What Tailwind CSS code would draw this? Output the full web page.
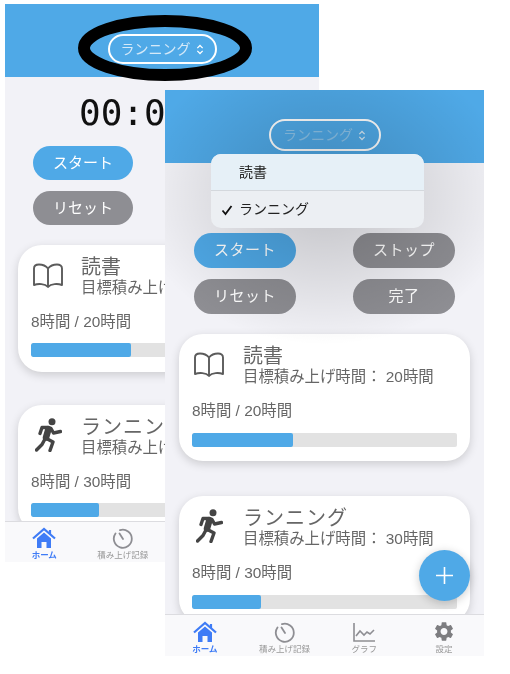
<!DOCTYPE html>
<html lang="ja">
  <head>
    <meta charset="UTF-8" />
    <meta name="viewport" content="width=device-width, initial-scale=1.0" />
    <title>積み上げ記録</title>
    <script src="https://cdn.jsdelivr.net/npm/@tailwindcss/browser@4"></script>
  </head>
  <body class="bg-white font-['Liberation_Sans','Noto_Sans_CJK_JP',sans-serif]">
    <div class="relative w-[510px] h-[674px] overflow-hidden bg-white blur-[0.4px]">

      <!-- Phone 1 -->
      <div class="absolute left-[5px] top-[4px] w-[314px] h-[558px] flex flex-col overflow-hidden bg-[#f2f2f7]">
        <div class="h-[73px] shrink-0 bg-[#4fa9e7] flex items-center justify-center pt-[17px]">
          <div class="w-[109px] h-[30px] rounded-full border-2 border-white flex items-center justify-center gap-[5px] text-[14px] text-[#d5e9f8]">
            ランニング
            <svg width="8" height="11" viewBox="0 0 9 12" fill="none" stroke="#fff" stroke-width="1.400"><path d="M1.500 4.500 4.500 1.500 7.500 4.500M1.500 7.500 4.500 10.500 7.500 7.500" /></svg>
          </div>
        </div>
        <div class="flex-1 min-h-0 overflow-hidden">
          <div class="h-[69px] pt-[3px] pl-[74px] flex items-center text-[36px] leading-none font-['DejaVu_Sans_Mono',monospace] text-[#111] whitespace-nowrap">00:00:00</div>
          <div class="px-[28px] grid grid-cols-[100px] gap-y-[11px]">
            <div class="h-[34px] rounded-full bg-[#4fa9e7] flex items-center justify-center text-white text-[15px]">スタート</div>
            <div class="h-[34px] rounded-full bg-[#8e8e93] flex items-center justify-center text-white text-[15px]">リセット</div>
          </div>
          <div class="mt-[20px] mx-[13px] h-[127px] rounded-[24px] bg-white shadow-[0_3px_10px_rgba(0,0,0,0.16)] px-[13px] pt-[10px]">
            <div class="flex items-start">
              <svg class="w-[34px] h-[26px] mt-[8px] shrink-0" viewBox="0 0 34 26" fill="none" stroke="#5b5b5b" stroke-width="1.900" stroke-linejoin="round"><path d="M17 5.500C15 3 12 1.500 8 1.500 5 1.500 3 3 3 5.500V22C7 20.500 14 20.500 17 24 20 20.500 27 20.500 31 22V5.500C31 3 29 1.500 26 1.500 22 1.500 19 3 17 5.500ZM17 5.500V24" /></svg>
              <div class="ml-[16px]">
                <p class="text-[20px] leading-[24px] text-[#666]">読書</p>
                <p class="text-[15.400px] leading-[18px] text-[#666] whitespace-nowrap">目標積み上げ時間： 20時間</p>
              </div>
            </div>
            <p class="mt-[15px] text-[15.400px] leading-[20px] text-[#666]">8時間 / 20時間</p>
            <div class="mt-[11px] h-[14px] rounded-[2px] bg-[#e2e2e2] overflow-hidden"><div class="h-full w-[38%] bg-[#4fa9e7] rounded-[2px]"></div></div>
          </div>
          <div class="mt-[33px] mx-[13px] h-[127px] rounded-[24px] bg-white shadow-[0_3px_10px_rgba(0,0,0,0.16)] px-[13px] pt-[10px]">
            <div class="flex items-start">
              <div class="w-[34px] flex justify-center shrink-0">
                <svg class="w-[27px] h-[34px] mt-[3px]" viewBox="0 0 27 34" fill="none" stroke="#444" stroke-width="3.400" stroke-linecap="round" stroke-linejoin="round"><circle cx="17" cy="3.700" r="3.500" fill="#444" stroke="none" /><path d="M13.500 11 11 19.500" stroke-width="6.500" /><path d="M13 9.500 7 9.500 5 15.500M16 10.500 18.500 15 25.500 13.500M10.500 20 7 26.500 1.500 32M10.500 20 18 24 15 32.500" /></svg>
              </div>
              <div class="ml-[16px]">
                <p class="text-[20px] leading-[24px] text-[#666] tracking-[1px]">ランニング</p>
                <p class="text-[15.400px] leading-[18px] text-[#666] whitespace-nowrap">目標積み上げ時間： 30時間</p>
              </div>
            </div>
            <p class="mt-[15px] text-[15.400px] leading-[20px] text-[#666]">8時間 / 30時間</p>
            <div class="mt-[11px] h-[14px] rounded-[2px] bg-[#e2e2e2] overflow-hidden"><div class="h-full w-[26%] bg-[#4fa9e7] rounded-[2px]"></div></div>
          </div>
        </div>
        <div class="h-[41px] shrink-0 bg-[#f9f9fb] border-t border-[#dcdce0] grid grid-cols-4 text-[8.500px] leading-[12px] text-[#999] text-center">
          <div class="flex flex-col items-center justify-end pb-[1px] text-[#3f7cf6] font-bold">
            <svg class="w-[24px] h-[22px]" viewBox="0 0 24 22"><path d="M1 11.500 12 2 23 11.500M18 7V3" fill="none" stroke="#3f7cf6" stroke-width="2.200" /><path d="M5 11.500 12 5.500 19 11.500V21H14.500V15H9.500V21H5Z" fill="#3f7cf6" /></svg>
            ホーム
          </div>
          <div class="flex flex-col items-center justify-end pb-[1px]">
            <svg class="w-[22px] h-[22px]" viewBox="0 0 22 22" fill="none" stroke="#8e8e93" stroke-width="1.800" stroke-linecap="round"><path d="M8 3.200A9 9 0 1 1 3.500 6.500M11 12 7.500 6.500" /></svg>
            積み上げ記録
          </div>
        </div>
      </div>

      <!-- hand-drawn ellipse round the picker -->
      <svg class="absolute left-[76px] top-[13px]" width="178" height="70" viewBox="0 0 178 70" fill="none"><ellipse cx="89" cy="35" rx="81" ry="27" stroke="#000" stroke-width="12" /></svg>

      <!-- Phone 2 -->
      <div class="absolute left-[165px] top-[90px] w-[319px] h-[566px] flex flex-col overflow-hidden bg-[#f2f2f7]">
        <div class="h-[73px] shrink-0 bg-[#4fa9e7] flex items-center justify-center pt-[17px]">
          <div class="w-[112px] h-[32px] rounded-full border-2 border-white flex items-center justify-center gap-[5px] text-[14px] text-[#8cc4ea]">
            ランニング
            <svg width="8" height="11" viewBox="0 0 9 12" fill="none" stroke="#d5e8f5" stroke-width="1.400"><path d="M1.500 4.500 4.500 1.500 7.500 4.500M1.500 7.500 4.500 10.500 7.500 7.500" /></svg>
          </div>
        </div>
        <div class="flex-1 min-h-0 overflow-hidden">
          <div class="h-[70px]"></div>
          <div class="px-[29px] grid grid-cols-[102px_102px] justify-between gap-y-[11px]">
            <div class="h-[35px] rounded-full bg-[#4fa9e7] flex items-center justify-center text-white text-[15px] tracking-[0.5px]">スタート</div>
            <div class="h-[35px] rounded-full bg-[#8e8e93] flex items-center justify-center text-white text-[15px] tracking-[0.5px]">ストップ</div>
            <div class="h-[35px] rounded-full bg-[#8e8e93] flex items-center justify-center text-white text-[15px] tracking-[0.5px]">リセット</div>
            <div class="h-[35px] rounded-full bg-[#8e8e93] flex items-center justify-center text-white text-[15px] tracking-[0.5px]">完了</div>
          </div>
          <div class="mt-[20px] mx-[14px] h-[127px] rounded-[24px] bg-white shadow-[0_3px_10px_rgba(0,0,0,0.16)] px-[13px] pt-[10px]">
            <div class="flex items-start">
              <svg class="w-[34px] h-[26px] mt-[8px] shrink-0" viewBox="0 0 34 26" fill="none" stroke="#5b5b5b" stroke-width="1.900" stroke-linejoin="round"><path d="M17 5.500C15 3 12 1.500 8 1.500 5 1.500 3 3 3 5.500V22C7 20.500 14 20.500 17 24 20 20.500 27 20.500 31 22V5.500C31 3 29 1.500 26 1.500 22 1.500 19 3 17 5.500ZM17 5.500V24" /></svg>
              <div class="ml-[17px]">
                <p class="text-[20px] leading-[24px] text-[#666]">読書</p>
                <p class="text-[15.400px] leading-[18px] text-[#666] whitespace-nowrap">目標積み上げ時間： 20時間</p>
              </div>
            </div>
            <p class="mt-[15px] text-[15.400px] leading-[20px] text-[#666]">8時間 / 20時間</p>
            <div class="mt-[12px] h-[14px] rounded-[2px] bg-[#e2e2e2] overflow-hidden"><div class="h-full w-[38%] bg-[#4fa9e7] rounded-[2px]"></div></div>
          </div>
          <div class="mt-[35px] mx-[14px] h-[127px] rounded-[24px] bg-white shadow-[0_3px_10px_rgba(0,0,0,0.16)] px-[13px] pt-[10px]">
            <div class="flex items-start">
              <div class="w-[34px] flex justify-center shrink-0">
                <svg class="w-[27px] h-[34px] mt-[3px]" viewBox="0 0 27 34" fill="none" stroke="#444" stroke-width="3.400" stroke-linecap="round" stroke-linejoin="round"><circle cx="17" cy="3.700" r="3.500" fill="#444" stroke="none" /><path d="M13.500 11 11 19.500" stroke-width="6.500" /><path d="M13 9.500 7 9.500 5 15.500M16 10.500 18.500 15 25.500 13.500M10.500 20 7 26.500 1.500 32M10.500 20 18 24 15 32.500" /></svg>
              </div>
              <div class="ml-[17px]">
                <p class="text-[20px] leading-[24px] text-[#666] tracking-[1px]">ランニング</p>
                <p class="text-[15.400px] leading-[18px] text-[#666] whitespace-nowrap">目標積み上げ時間： 30時間</p>
              </div>
            </div>
            <p class="mt-[15px] text-[15.400px] leading-[20px] text-[#666]">8時間 / 30時間</p>
            <div class="mt-[12px] h-[14px] rounded-[2px] bg-[#e2e2e2] overflow-hidden"><div class="h-full w-[26%] bg-[#4fa9e7] rounded-[2px]"></div></div>
          </div>
        </div>
        <div class="h-[42px] shrink-0 bg-[#f9f9fb] border-t border-[#dcdce0] grid grid-cols-4 text-[8.500px] leading-[12px] text-[#999] text-center">
          <div class="flex flex-col items-center justify-end pb-[1px] text-[#3f7cf6] font-bold">
            <svg class="w-[24px] h-[22px]" viewBox="0 0 24 22"><path d="M1 11.500 12 2 23 11.500M18 7V3" fill="none" stroke="#3f7cf6" stroke-width="2.200" /><path d="M5 11.500 12 5.500 19 11.500V21H14.500V15H9.500V21H5Z" fill="#3f7cf6" /></svg>
            ホーム
          </div>
          <div class="flex flex-col items-center justify-end pb-[1px]">
            <svg class="w-[22px] h-[22px]" viewBox="0 0 22 22" fill="none" stroke="#8e8e93" stroke-width="1.800" stroke-linecap="round"><path d="M8 3.200A9 9 0 1 1 3.500 6.500M11 12 7.500 6.500" /></svg>
            積み上げ記録
          </div>
          <div class="flex flex-col items-center justify-end pb-[1px]">
            <svg class="w-[24px] h-[22px]" viewBox="0 0 24 22" fill="none" stroke="#8e8e93" stroke-width="1.600"><path d="M2 2V20H23M4 15l4-5 4 4 3-3 3 2 4-4" /></svg>
            グラフ
          </div>
          <div class="flex flex-col items-center justify-end pb-[1px]">
            <svg class="w-[26px] h-[23px]" viewBox="0 0 24 24" fill="#7d7d80"><path d="M19.140 12.940c.04-.3.06-.61.06-.94 0-.32-.02-.64-.07-.94l2.030-1.580c.18-.14.23-.41.12-.61l-1.920-3.320c-.12-.22-.37-.29-.59-.22l-2.390.96c-.5-.38-1.030-.7-1.620-.94l-.36-2.540c-.04-.24-.24-.41-.48-.41h-3.840c-.24 0-.43.17-.47.41l-.36 2.540c-.59.24-1.130.57-1.620.94l-2.390-.96c-.22-.08-.47 0-.59.22L2.740 8.870c-.12.21-.08.47.12.61l2.030 1.580c-.05.3-.09.63-.09.94s.02.64.07.94l-2.030 1.580c-.18.14-.23.41-.12.61l1.920 3.320c.12.22.37.29.59.22l2.390-.96c.5.38 1.030.7 1.620.94l.36 2.540c.05.24.24.41.48.41h3.840c.24 0 .44-.17.47-.41l.36-2.540c.59-.24 1.130-.56 1.620-.94l2.390.96c.22.08.47 0 .59-.22l1.920-3.320c.12-.22.07-.47-.12-.61l-2.010-1.580zM12 15.600c-1.980 0-3.600-1.620-3.600-3.600s1.620-3.600 3.600-3.600 3.600 1.620 3.600 3.600-1.620 3.600-3.600 3.600z" /></svg>
            設定
          </div>
        </div>

        <!-- dim behind the menu -->
        <div class="absolute inset-0 bg-[radial-gradient(ellipse_190px_150px_at_50%_105px,rgba(0,0,0,0.2),rgba(0,0,0,0))]"></div>

        <!-- picker menu -->
        <div class="absolute left-[46px] top-[64px] w-[213px] h-[74px] rounded-[10px] overflow-hidden bg-[#eceff3] text-[14px] text-[#222]">
          <div class="h-[37px] bg-[#e6f0f7] border-b border-[#d4d8dd] pl-[28px] flex items-center">読書</div>
          <div class="h-[37px] pl-[10px] flex items-center gap-[6px]">
            <svg width="12" height="12" viewBox="0 0 12 12" fill="none" stroke="#111" stroke-width="1.800"><path d="M1.500 6.500 4.500 10 10.500 2" /></svg>
            ランニング
          </div>
        </div>

        <!-- add button -->
        <div class="absolute left-[254px] top-[460px] w-[51px] h-[51px] rounded-full bg-[#4fa9e7] shadow-[0_2px_10px_rgba(0,0,0,0.2)] flex items-center justify-center">
          <svg width="17" height="17" viewBox="0 0 17 17" stroke="#fff" stroke-width="1.600"><path d="M8.500 0V17M0 8.500H17" /></svg>
        </div>
      </div>
    </div>
  </body>
</html>
